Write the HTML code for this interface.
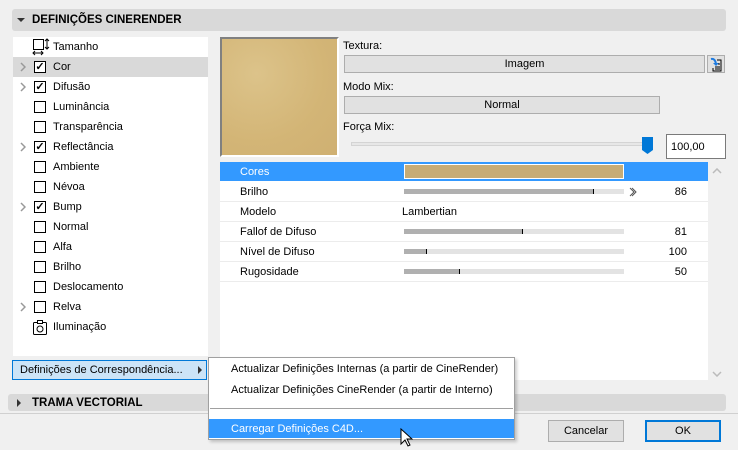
<!DOCTYPE html>
<html><head><meta charset="utf-8"><style>
*{margin:0;padding:0;box-sizing:border-box}
body{width:738px;height:450px;background:#f0f0f0;font-family:"Liberation Sans",sans-serif;font-size:11px;color:#000;position:relative;overflow:hidden}
.a{position:absolute}
.bar{background:#d9d9d9;border-radius:3px}
.row{position:absolute;left:13px;width:195px;height:20px;line-height:21px}
.cb{position:absolute;left:21px;top:4px;width:12px;height:12px;border:1px solid #000;background:#fff;font-size:11px;line-height:10px;text-align:center;font-weight:bold}
.lbl{position:absolute;left:40px}
.chev{position:absolute;left:7px;top:5px}
.tr{position:absolute;left:220px;width:488px;height:20px;line-height:21px;border-bottom:1px solid #ececec}
.tr .l{position:absolute;left:20px}
.trk{position:absolute;left:184px;top:7px;width:220px;height:5px;background:#e3e3e3}
.trk i{position:absolute;left:0;top:0;height:5px;background:#b0b0b0;border-right:1px solid #000}
.v{position:absolute;right:21px;text-align:right}
.btn{position:absolute;background:#e1e1e1;border:1px solid #adadad;text-align:center}
</style></head><body>
<div class="a bar" style="left:12px;top:9px;width:714px;height:22px"></div>
<div class="a" style="left:17px;top:18px;width:0;height:0;border-left:4px solid transparent;border-right:4px solid transparent;border-top:4px solid #333"></div>
<div class="a" style="left:32px;top:14px;font-weight:bold;font-size:11.5px">DEFINIÇÕES CINERENDER</div>

<div class="a" style="left:13px;top:37px;width:195px;height:319px;background:#fff"></div>
<div class="row" style="top:37px"><svg class="a" style="left:19px;top:1px" width="18" height="18"><rect x="1.5" y="1.5" width="10" height="10" fill="none" stroke="#000"/><path d="M15 1v10M13 3l2-2 2 2M13 9l2 2 2-2M1 15h10M3 13l-2 2 2 2M9 13l2 2-2 2" stroke="#000" fill="none"/></svg><span class="lbl">Tamanho</span></div>
<div class="row" style="top:57px;background:#d9d9d9"><svg class="chev" width="6" height="10"><path d="M1 1l4 4-4 4" stroke="#999" stroke-width="1.5" fill="none"/></svg><span class="cb">✓</span><span class="lbl">Cor</span></div>
<div class="row" style="top:77px"><svg class="chev" width="6" height="10"><path d="M1 1l4 4-4 4" stroke="#999" stroke-width="1.5" fill="none"/></svg><span class="cb">✓</span><span class="lbl">Difusão</span></div>
<div class="row" style="top:97px"><span class="cb"></span><span class="lbl">Luminância</span></div>
<div class="row" style="top:117px"><span class="cb"></span><span class="lbl">Transparência</span></div>
<div class="row" style="top:137px"><svg class="chev" width="6" height="10"><path d="M1 1l4 4-4 4" stroke="#999" stroke-width="1.5" fill="none"/></svg><span class="cb">✓</span><span class="lbl">Reflectância</span></div>
<div class="row" style="top:157px"><span class="cb"></span><span class="lbl">Ambiente</span></div>
<div class="row" style="top:177px"><span class="cb"></span><span class="lbl">Névoa</span></div>
<div class="row" style="top:197px"><svg class="chev" width="6" height="10"><path d="M1 1l4 4-4 4" stroke="#999" stroke-width="1.5" fill="none"/></svg><span class="cb">✓</span><span class="lbl">Bump</span></div>
<div class="row" style="top:217px"><span class="cb"></span><span class="lbl">Normal</span></div>
<div class="row" style="top:237px"><span class="cb"></span><span class="lbl">Alfa</span></div>
<div class="row" style="top:257px"><span class="cb"></span><span class="lbl">Brilho</span></div>
<div class="row" style="top:277px"><span class="cb"></span><span class="lbl">Deslocamento</span></div>
<div class="row" style="top:297px"><svg class="chev" width="6" height="10"><path d="M1 1l4 4-4 4" stroke="#999" stroke-width="1.5" fill="none"/></svg><span class="cb"></span><span class="lbl">Relva</span></div>
<div class="row" style="top:317px"><svg class="a" style="left:20px;top:3px" width="14" height="15"><rect x="0.5" y="2.5" width="13" height="12" rx="1" fill="none" stroke="#000"/><rect x="4.5" y="0.5" width="5" height="3" fill="#fff" stroke="#000"/><circle cx="7" cy="9" r="3" fill="none" stroke="#000"/></svg><span class="lbl">Iluminação</span></div>

<div class="a" style="left:220px;top:37px;width:119px;height:120px;border:2px solid #808080;border-right-color:#fff;border-bottom-color:#fff;background:radial-gradient(circle at 30% 30%,#dcc38a,#d3b576 60%,#cfb072);"></div>
<div class="a" style="left:343px;top:40px">Textura:</div>
<div class="btn" style="left:344px;top:55px;width:361px;height:18px;line-height:17px">Imagem</div>
<svg class="a" style="left:707px;top:55px" width="18" height="18"><rect x="0.5" y="0.5" width="17" height="17" fill="#e1e1e1" stroke="#adadad"/><path d="M4 4q4-1 5 5" stroke="#1e7be0" stroke-width="2" fill="none"/><path d="M6 8l3 3 3-3" fill="#1e7be0"/><path d="M10 5h4v11h-8v-3M11 9h2M8 12h5M8 14h5" stroke="#000" fill="none"/></svg>
<div class="a" style="left:343px;top:81px">Modo Mix:</div>
<div class="btn" style="left:344px;top:96px;width:316px;height:18px;line-height:17px">Normal</div>
<div class="a" style="left:343px;top:121px">Força Mix:</div>
<div class="a" style="left:351px;top:142px;width:296px;height:4px;background:#e7e7e7;border:1px solid #d4d4d4"></div>
<svg class="a" style="left:641px;top:136px" width="13" height="19"><path d="M1 1h11v13l-5.5 4-5.5-4z" fill="#0078d7"/></svg>
<div class="a" style="left:666px;top:134px;width:60px;height:25px;background:#fff;border:1px solid #7a7a7a;line-height:24px;padding-left:4px">100,00</div>

<div class="a" style="left:220px;top:162px;width:506px;height:218px;background:#fff"></div>
<div class="a" style="left:708px;top:162px;width:18px;height:218px;background:#f0f0f0"></div>
<svg class="a" style="left:712px;top:168px" width="10" height="6"><path d="M1 5l4-4 4 4" stroke="#bbb" stroke-width="1.5" fill="none"/></svg>
<svg class="a" style="left:712px;top:371px" width="10" height="6"><path d="M1 1l4 4 4-4" stroke="#bbb" stroke-width="1.5" fill="none"/></svg>
<div class="tr" style="top:162px;background:#3399ff;color:#fff;border:none;height:19px"><span class="l">Cores</span><div class="a" style="left:184px;top:2px;width:220px;height:15px;background:#c7ac76;border:1px solid #fff"></div></div>
<div class="tr" style="top:182px"><span class="l">Brilho</span><div class="trk"><i style="width:190px"></i></div><svg class="a" style="left:409px;top:5px" width="8" height="10"><path d="M1 1l4 4-4 4M3 1l4 4-4 4" stroke="#555" fill="none"/></svg><span class="v">86</span></div>
<div class="tr" style="top:202px"><span class="l">Modelo</span><span class="a" style="left:182px">Lambertian</span></div>
<div class="tr" style="top:222px"><span class="l">Fallof de Difuso</span><div class="trk"><i style="width:119px"></i></div><span class="v">81</span></div>
<div class="tr" style="top:242px"><span class="l">Nível de Difuso</span><div class="trk"><i style="width:23px"></i></div><span class="v">100</span></div>
<div class="tr" style="top:262px"><span class="l">Rugosidade</span><div class="trk"><i style="width:56px"></i></div><span class="v">50</span></div>

<div class="a bar" style="left:8px;top:394px;width:718px;height:17px;border-radius:3px"></div>
<div class="a" style="left:17px;top:399px;width:0;height:0;border-top:4px solid transparent;border-bottom:4px solid transparent;border-left:4px solid #333"></div>
<div class="a" style="left:32px;top:397px;font-weight:bold;font-size:11.5px">TRAMA VECTORIAL</div>
<div class="a" style="left:0;top:413px;width:738px;height:1px;background:#d0d0d0"></div>

<div class="a" style="left:12px;top:360px;width:195px;height:20px;background:#cce4f7;border:1px solid #0078d7;line-height:19px;padding-left:7px">Definições de Correspondência...<span class="a" style="left:185px;top:5px;width:0;height:0;border-top:4px solid transparent;border-bottom:4px solid transparent;border-left:4px solid #333"></span></div>

<div class="a" style="left:208px;top:357px;width:307px;height:83px;background:#fff;border:1px solid #a0a0a0;box-shadow:2px 2px 3px rgba(0,0,0,.2)"></div>
<div class="a" style="left:231px;top:363px">Actualizar Definições Internas (a partir de CineRender)</div>
<div class="a" style="left:231px;top:384px">Actualizar Definições CineRender (a partir de Interno)</div>
<div class="a" style="left:210px;top:408px;width:303px;height:1px;background:#a0a0a0"></div>
<div class="a" style="left:209px;top:419px;width:305px;height:19px;background:#3399ff;color:#fff;line-height:20px;padding-left:22px">Carregar Definições C4D...</div>
<svg class="a" style="left:400px;top:428px" width="13" height="20"><path d="M1 1v15l4-4 3 6 2-1-3-6h5z" fill="#fff" stroke="#000"/></svg>

<div class="btn" style="left:548px;top:420px;width:76px;height:22px;line-height:21px">Cancelar</div>
<div class="btn" style="left:645px;top:420px;width:76px;height:22px;line-height:19px;border:2px solid #0078d7">OK</div>
</body></html>
